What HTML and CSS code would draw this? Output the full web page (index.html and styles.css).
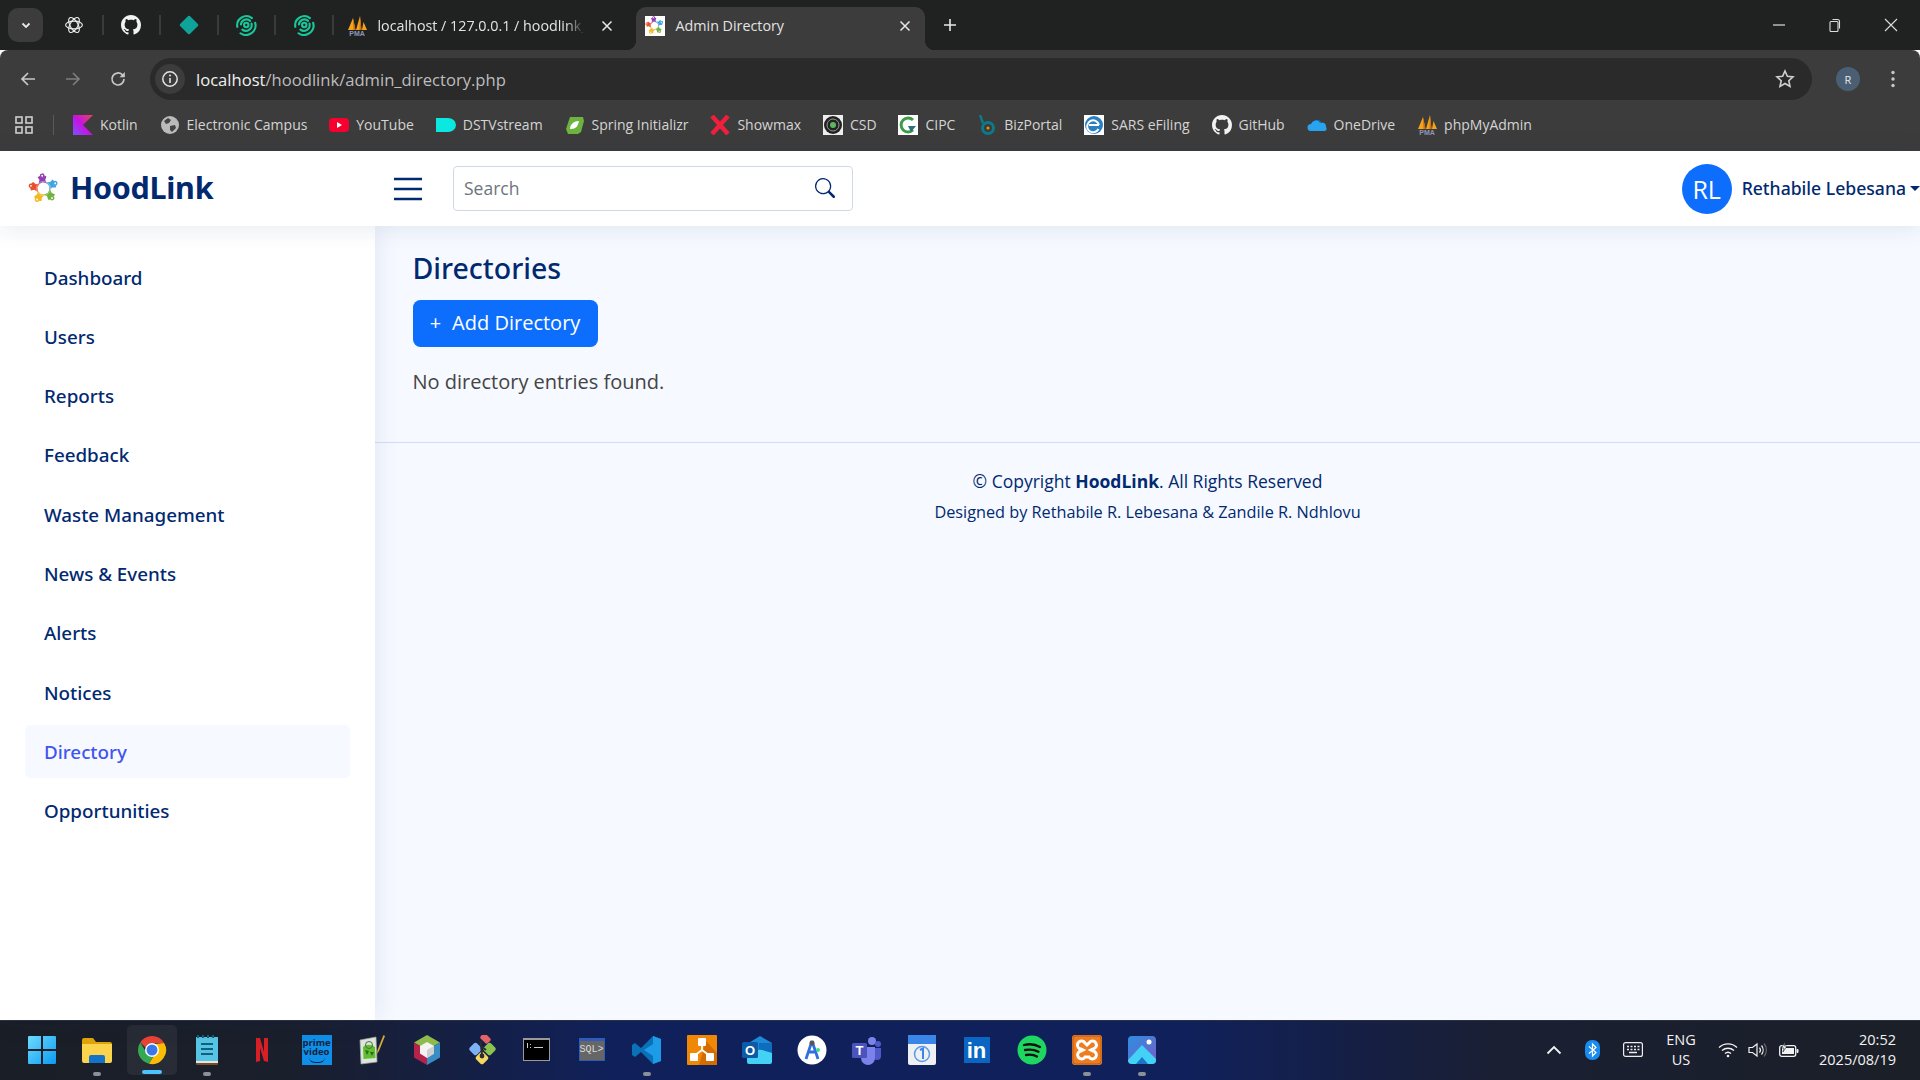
FILE: index.html
```html
<!DOCTYPE html>
<html lang="en">
<head>
<meta charset="utf-8">
<title>Admin Directory</title>
<link rel="stylesheet" href="styles.css">
</head>
<body>
<svg class="sprite" aria-hidden="true">
  <symbol id="i-github" viewBox="0 0 16 16"><path fill="currentColor" d="M8 0C3.58 0 0 3.58 0 8c0 3.54 2.29 6.53 5.47 7.59.4.07.55-.17.55-.38 0-.19-.01-.82-.01-1.49-2.01.37-2.53-.49-2.69-.94-.09-.23-.48-.94-.82-1.13-.28-.15-.68-.52-.01-.53.63-.01 1.08.58 1.23.82.72 1.21 1.87.87 2.33.66.07-.52.28-.87.51-1.07-1.78-.2-3.64-.89-3.64-3.95 0-.87.31-1.59.82-2.15-.08-.2-.36-1.02.08-2.12 0 0 .67-.21 2.2.82.64-.18 1.32-.27 2-.27s1.36.09 2 .27c1.53-1.04 2.2-.82 2.2-.82.44 1.1.16 1.92.08 2.12.51.56.82 1.27.82 2.15 0 3.07-1.87 3.75-3.65 3.95.29.25.54.73.54 1.48 0 1.07-.01 1.93-.01 2.2 0 .21.15.46.55.38A8.01 8.01 0 0 0 16 8c0-4.42-3.58-8-8-8"/></symbol>
  <symbol id="i-figure" viewBox="0 0 30 30">
    <path fill="currentColor" d="M10.500 10.500 12 6.500 10.500 3.500 12.500 2.500 14 4.500 16 4.500 17.500 2.500 19 3.800 17.500 7 19 10.500 15 9z"/>
    <circle cx="15" cy="2.600" r="2.300" fill="currentColor"/>
    <circle cx="15" cy="2.600" r=".9" fill="#fff"/>
  </symbol>
  <symbol id="i-logo" viewBox="0 0 30 30">
    <use href="#i-figure" class="f-purple" width="30" height="30" transform="rotate(-6 15 15)"/>
    <use href="#i-figure" class="f-blue" width="30" height="30" transform="rotate(66 15 15)"/>
    <use href="#i-figure" class="f-green" width="30" height="30" transform="rotate(138 15 15)"/>
    <use href="#i-figure" class="f-yellow" width="30" height="30" transform="rotate(210 15 15)"/>
    <use href="#i-figure" class="f-red" width="30" height="30" transform="rotate(282 15 15)"/>
    <circle cx="15" cy="15" r="6.800" fill="none" stroke="#e9e3d8" stroke-width=".5"/>
  </symbol>
  <symbol id="i-pma" viewBox="0 0 20 20">
    <path fill="#f7a21c" d="M1 14 6 2l2.500 12zM9 14 13 0l1.500 14zM15 14l1.500-8L20 14z"/>
    <path fill="#c96f0a" d="M6 2l.5 12h2zM13 0l-.5 14h2z"/>
  </symbol>
  <symbol id="i-swirl" viewBox="0 0 24 24">
    <g fill="none" stroke="#19c89a" stroke-width="2.300" stroke-linecap="round">
      <path d="M2.500 14A10 10 0 0 1 18.500 4.500"/>
      <path d="M6.500 11.500A6 6 0 0 1 16.500 7.500"/>
      <path d="M18 10.500A6.300 6.300 0 0 1 8 17"/>
      <path d="M22 9.500A10.500 10.500 0 0 1 6 21"/>
      <circle cx="12.300" cy="12" r="2.400"/>
    </g>
  </symbol>
</svg>

<div class="tabstrip">
  <button class="tab-list"><svg width="12" height="12" viewBox="0 0 12 12"><path d="M2.500 4.500 6 8l3.500-3.500" fill="none" stroke="#e8e8e8" stroke-width="1.800"/></svg></button>
  <div class="pinned">
    <span class="pin"><svg width="18" height="18" viewBox="0 0 20 20" fill="none" stroke="#ececec" stroke-width="1.300"><ellipse cx="10" cy="10" rx="9.300" ry="4.300"/><ellipse cx="10" cy="10" rx="9.300" ry="4.300" transform="rotate(60 10 10)"/><ellipse cx="10" cy="10" rx="9.300" ry="4.300" transform="rotate(120 10 10)"/></svg></span>
    <span class="pin"><svg class="ic-white" width="20" height="20"><use href="#i-github"/></svg></span>
    <span class="pin"><svg width="20" height="20" viewBox="0 0 20 20"><path fill="#0fa39a" stroke="#0fa39a" stroke-width="2.500" stroke-linejoin="round" d="M10 2 18 10 10 18 2 10z"/></svg></span>
    <span class="pin"><svg width="22" height="22"><use href="#i-swirl"/></svg></span>
    <span class="pin"><svg width="22" height="22"><use href="#i-swirl"/></svg></span>
  </div>
  <div class="tab tab-idle">
    <svg class="fav" width="20" height="20" viewBox="0 0 20 20"><use href="#i-pma" width="20" height="20"/><text class="pma-text" x="10" y="20">PMA</text></svg>
    <span class="tab-title tab-fade">localhost / 127.0.0.1 / hoodlink_</span>
    <svg class="tab-x" width="12" height="12" viewBox="0 0 12 12"><path d="M1.500 1.500l9 9m0-9-9 9" stroke="#e8e8e8" stroke-width="1.500"/></svg>
  </div>
  <div class="tab tab-active">
    <span class="fav-white"><svg width="19" height="19"><use href="#i-logo"/></svg></span>
    <span class="tab-title">Admin Directory</span>
    <svg class="tab-x" width="12" height="12" viewBox="0 0 12 12"><path d="M1.500 1.500l9 9m0-9-9 9" stroke="#e8e8e8" stroke-width="1.500"/></svg>
  </div>
  <svg class="tab-plus" width="14" height="14" viewBox="0 0 14 14"><path d="M7 1v12M1 7h12" stroke="#e8e8e8" stroke-width="1.600"/></svg>
  <div class="winctl">
    <svg width="14" height="14" viewBox="0 0 14 14"><path d="M1 7h12" stroke="#ddd" stroke-width="1.200"/></svg>
    <svg width="14" height="14" viewBox="0 0 14 14" fill="none" stroke="#ddd" stroke-width="1.100"><rect x="2" y="3.500" width="8" height="10" rx="1"/><path d="M4.500 1.500h5a2 2 0 0 1 2 2v7"/></svg>
    <svg width="14" height="14" viewBox="0 0 14 14"><path d="M1 1l12 12M13 1 1 13" stroke="#ddd" stroke-width="1.100"/></svg>
  </div>
</div>

<div class="toolbar">
  <svg class="nav" width="18" height="18" viewBox="0 0 18 18"><path d="M16 9H3M9 3 3 9l6 6" fill="none" stroke="#c8c8c8" stroke-width="1.700"/></svg>
  <svg class="nav" width="18" height="18" viewBox="0 0 18 18"><path d="M2 9h13M9 3l6 6-6 6" fill="none" stroke="#7d7d7d" stroke-width="1.700"/></svg>
  <svg class="nav" width="18" height="18" viewBox="0 0 18 18"><path d="M15 9a6 6 0 1 1-1.800-4.300L15 6.500" fill="none" stroke="#c8c8c8" stroke-width="1.700"/><path d="M15.800 2v5.300h-5.300z" fill="#c8c8c8"/></svg>
  <div class="omnibox">
    <span class="site-info"><svg width="18" height="18" viewBox="0 0 18 18"><circle cx="9" cy="9" r="7.200" fill="none" stroke="#e4e4e4" stroke-width="1.500"/><path d="M9 8v5" stroke="#e4e4e4" stroke-width="1.600"/><circle cx="9" cy="5.500" r="1" fill="#e4e4e4"/></svg></span>
    <span class="url"><b>localhost</b>/hoodlink/admin_directory.php</span>
    <svg class="star" width="20" height="20" viewBox="0 0 20 20"><path d="m10 2 2.400 5.300 5.600.6-4.200 3.800 1.200 5.700-5-2.900-5 2.900 1.200-5.700L2 7.900l5.600-.6z" fill="none" stroke="#d0d0d0" stroke-width="1.600"/></svg>
  </div>
  <span class="profile">R</span>
  <svg width="4" height="18" viewBox="0 0 4 18" class="dots"><circle cx="2" cy="2.500" r="1.700" fill="#c8c8c8"/><circle cx="2" cy="9" r="1.700" fill="#c8c8c8"/><circle cx="2" cy="15.500" r="1.700" fill="#c8c8c8"/></svg>
</div>

<div class="bookmarks">
  <svg class="apps" width="18" height="18" viewBox="0 0 18 18" fill="none" stroke="#cfcfcf" stroke-width="1.600"><rect x="1" y="1" width="6" height="6"/><rect x="11" y="1" width="6" height="6"/><rect x="1" y="11" width="6" height="6"/><rect x="11" y="11" width="6" height="6"/></svg>
  <span class="bm-sep"></span>
  <span class="bm"><svg width="20" height="20" viewBox="0 0 20 20"><defs><linearGradient id="kt" x1="0" y1="1" x2="1" y2="0"><stop offset="0" stop-color="#7f52ff"/><stop offset=".5" stop-color="#c711e1"/><stop offset="1" stop-color="#e44857"/></linearGradient></defs><path fill="url(#kt)" d="M0 0h20L10 10l10 10H0z"/></svg>Kotlin</span>
  <span class="bm"><svg width="20" height="20" viewBox="0 0 20 20"><circle cx="10" cy="10" r="9" fill="#bbb"/><path fill="#444" d="M4 6l4-3 3 2-2 3-3 1zM10 11l5-1 1 3-4 4-2-2z"/></svg>Electronic Campus</span>
  <span class="bm"><svg width="20" height="20" viewBox="0 0 20 20"><rect y="3" width="20" height="14" rx="4" fill="#f5002f"/><path fill="#fff" d="M8 7l5 3-5 3z"/></svg>YouTube</span>
  <span class="bm"><svg width="20" height="20" viewBox="0 0 20 20"><path fill="#0be8e0" d="M0 3h12a8 7 0 0 1 0 14H0z"/></svg>DSTVstream</span>
  <span class="bm"><svg width="20" height="20" viewBox="0 0 20 20"><path fill="#6db33f" d="M5 2h13l1 4-3 11-3 2H3l-2-5z"/><path fill="#fff" d="M5 14c0-5 4-8 9-8-1 5-3 8-8 8z"/></svg>Spring Initializr</span>
  <span class="bm"><svg width="20" height="20" viewBox="0 0 20 20" fill="none" stroke="#f0203c" stroke-width="4.500"><path d="M2 1l8 9-8 9M18 1l-8 9 8 9"/></svg>Showmax</span>
  <span class="bm"><svg width="20" height="20" viewBox="0 0 20 20"><rect width="20" height="20" fill="#eee"/><circle cx="10" cy="10" r="9" fill="#222"/><circle cx="10" cy="10" r="6" fill="none" stroke="#999"/><circle cx="10" cy="10" r="3" fill="#5fb55f"/></svg>CSD</span>
  <span class="bm"><svg width="20" height="20" viewBox="0 0 20 20"><rect width="20" height="20" fill="#fff"/><path d="M15 5a7 7 0 1 0 0 10" fill="none" stroke="#3d9c4a" stroke-width="3"/><path d="M10 11h8l-5 6z" fill="#2c6e7d"/></svg>CIPC</span>
  <span class="bm"><svg width="20" height="20" viewBox="0 0 20 20"><path d="M3 0l3 8" stroke="#0b7a8a" stroke-width="2.500"/><circle cx="11" cy="13" r="5.500" fill="none" stroke="#0b7a8a" stroke-width="3"/><circle cx="11" cy="13" r="1.500" fill="#f29111"/></svg>BizPortal</span>
  <span class="bm"><svg width="20" height="20" viewBox="0 0 20 20"><rect width="20" height="20" fill="#fff"/><circle cx="10" cy="10" r="9" fill="#2a7fc1"/><path d="M5 10h10M14.500 14a6 6 0 1 1 .5-4" fill="none" stroke="#fff" stroke-width="2"/></svg>SARS eFiling</span>
  <span class="bm"><svg class="ic-white" width="20" height="20"><use href="#i-github"/></svg>GitHub</span>
  <span class="bm"><svg width="20" height="20" viewBox="0 0 20 20"><path fill="#0a6ed1" d="M5 9a5 5 0 0 1 9-2l-2 8H4a3.500 3.500 0 0 1 1-6"/><path fill="#2aa3ee" d="M4 16a3.500 3.500 0 0 1 0-7 5 5 0 0 1 9-1 4 4 0 0 1 6 4 2.500 2.500 0 0 1-1 4z"/></svg>OneDrive</span>
  <span class="bm"><svg width="20" height="20" viewBox="0 0 20 20"><use href="#i-pma" width="20" height="20"/><text class="pma-text" x="10" y="20">PMA</text></svg>phpMyAdmin</span>
</div>

<header class="app-header">
  <div class="brand">
    <svg width="31" height="31"><use href="#i-logo"/></svg>
    <span class="brand-name">HoodLink</span>
  </div>
  <svg class="burger" width="28" height="24" viewBox="0 0 28 24"><path d="M0 2h28M0 12h28M0 22h28" stroke="#012970" stroke-width="2.400"/></svg>
  <div class="search">
    <span class="search-ph">Search</span>
    <svg width="20" height="20" viewBox="0 0 16 16"><path fill="#012970" d="M11.742 10.344a6.500 6.500 0 1 0-1.397 1.398h-.001q.044.06.098.115l3.850 3.850a1 1 0 0 0 1.415-1.414l-3.850-3.850a1 1 0 0 0-.115-.1zM12 6.500a5.500 5.500 0 1 1-11 0 5.500 5.500 0 0 1 11 0"/></svg>
  </div>
  <div class="user">
    <span class="avatar">RL</span>
    <span class="user-name">Rethabile Lebesana</span>
    <span class="caret"></span>
  </div>
</header>

<div class="app-body">
  <nav class="sidebar">
    <a class="nav-link">Dashboard</a>
    <a class="nav-link">Users</a>
    <a class="nav-link">Reports</a>
    <a class="nav-link">Feedback</a>
    <a class="nav-link">Waste Management</a>
    <a class="nav-link">News &amp; Events</a>
    <a class="nav-link">Alerts</a>
    <a class="nav-link">Notices</a>
    <a class="nav-link is-active">Directory</a>
    <a class="nav-link">Opportunities</a>
  </nav>
  <div class="content">
    <main class="main">
      <h1 class="page-title">Directories</h1>
      <button class="btn-add"><span class="plus">+</span>Add Directory</button>
      <p class="empty">No directory entries found.</p>
    </main>
    <footer class="footer">
      <div class="copyright">© Copyright <strong>HoodLink</strong>. All Rights Reserved</div>
      <div class="credits">Designed by Rethabile R. Lebesana &amp; Zandile R. Ndhlovu</div>
    </footer>
  </div>
</div>

<div class="taskbar">
  <div class="apps-row">
    <span class="slot"><svg width="30" height="30" viewBox="0 0 30 30"><defs><linearGradient id="win" x1="0" y1="0" x2="1" y2="1"><stop offset="0" stop-color="#6fdcff"/><stop offset="1" stop-color="#0a9bf0"/></linearGradient></defs><path fill="url(#win)" d="M1 2a1 1 0 0 1 1-1h12v13H1zM16 1h12a1 1 0 0 1 1 1v12H16zM1 16h13v13H2a1 1 0 0 1-1-1zM16 16h13v12a1 1 0 0 1-1 1H16z"/></svg></span>
    <span class="slot running"><svg width="30" height="30" viewBox="0 0 30 30"><path fill="#e0a30a" d="M0 5a2 2 0 0 1 2-2h9l3 4h14a2 2 0 0 1 2 2v6H0z"/><path fill="#fcd34d" d="M0 9h30v17a2 2 0 0 1-2 2H2a2 2 0 0 1-2-2z"/><path fill="#1473c9" d="M7 22a2 2 0 0 1 2-2h12a2 2 0 0 1 2 2v6H7z"/></svg></span>
    <span class="slot focused"><svg width="30" height="30" viewBox="0 0 30 30"><path fill="#ea4335" d="M15 1a14 14 0 0 1 12.100 7H15a7 7 0 0 0-6.500 4.500L3.300 7.500A14 14 0 0 1 15 1z"/><path fill="#34a853" d="M3.300 7.500 9 17a7 7 0 0 0 7 5l-4 6.800A14 14 0 0 1 3.300 7.500z"/><path fill="#fbbc05" d="M27.100 8A14 14 0 0 1 12 28.800L18 19a7 7 0 0 0-1-10z"/><circle cx="15" cy="15" r="7" fill="#fff"/><circle cx="15" cy="15" r="5.500" fill="#3b78e7"/></svg></span>
    <span class="slot running"><svg width="24" height="30" viewBox="0 0 24 30"><path fill="#56c4e4" d="M1 2h22v24H1z"/><path fill="#7a4a2a" d="M1 26h22v3a1 1 0 0 1-1 1H2a1 1 0 0 1-1-1z"/><path fill="#e9e4da" d="M1 26h22v2H1z"/><path d="M6 9h12M6 14h12M6 19h12" stroke="#14607c" stroke-width="2"/><path fill="#14607c" d="M2 0h2v3H2zM7 0h2v3H7zM12 0h2v3h-2zM17 0h2v3h-2z"/></svg></span>
    <span class="slot"><svg width="14" height="24" viewBox="0 0 14 24"><path fill="#d81f26" d="M1 0h4l4 14V0h4v24l-4-1L5 10v13l-4 1z"/></svg></span>
    <span class="slot"><span class="prime">prime<br>video</span></span>
    <span class="slot"><svg width="28" height="30" viewBox="0 0 28 30"><path fill="#dfe5dc" stroke="#9aa39a" stroke-width=".7" d="M2 5l16-3 1 25-16 2z"/><path fill="#5fbf2f" d="M5 12c3-3 8-3 12 0l.5 11-12 1z"/><circle cx="11" cy="10" r="3.500" fill="none" stroke="#4f6b46"/><path fill="#2e6a1b" d="M7 15l4 1-2 4zM12 17l4 0-2 4z"/><path d="M27 1l-6 15-2 3 .5-4 6-15z" fill="#d7a83b"/></svg></span>
    <span class="slot"><svg width="26" height="30" viewBox="0 0 26 30"><path fill="#8dbb4c" d="M13 0 26 7.500 13 15 0 7.500z"/><path fill="#b5234a" d="M0 7.500 13 15v15L0 22.500z"/><path fill="#3a8cc4" d="M26 7.500 13 15v15l13-7.500z"/><path fill="#f3f3f3" d="M13 7l7 4v7.500L13 23l-7-4.500V11z"/><path fill="#cfcfcf" d="M13 15l7-4v7.500L13 23z"/></svg></span>
    <span class="slot"><svg width="30" height="30" viewBox="0 0 30 30"><rect x="13.500" y="0" width="10" height="7" rx="2" fill="#e4626a" transform="rotate(45 18.500 3.500)"/><rect x="3.500" y="9" width="10" height="10" rx="2" fill="#7db1f5" transform="rotate(45 8.500 14)"/><rect x="17.500" y="9" width="10" height="10" rx="2" fill="#8cc34f" transform="rotate(45 22.500 14)"/><rect x="10" y="18" width="10" height="10" rx="2" fill="#f6d860" transform="rotate(45 15 23)"/><path d="M13.500 6 15 20M15 12l4 3" stroke="#2c2c34" stroke-width="2"/><circle cx="15" cy="21" r="2.400" fill="#2c2c34"/></svg></span>
    <span class="slot"><span class="cmd"><svg width="18" height="6" viewBox="0 0 18 6"><path d="M1 0h1v5H1zM4 1h1v1H4zm0 3h1v1H4zM8 4h9v1H8z" fill="#ccc"/></svg></span></span>
    <span class="slot"><span class="sqlplus">SQL&gt;</span></span>
    <span class="slot running"><svg width="30" height="30" viewBox="0 0 30 30"><path fill="#0a70b8" d="M21 1 9 13 3 8 0 10v10l3 2 6-5 12 12 8-3V4z"/><path fill="#1e9be6" d="M21 1l8 3v22l-8 3zM21 9l-9 6 9 6z" fill-rule="evenodd"/></svg></span>
    <span class="slot"><svg width="30" height="30" viewBox="0 0 30 30"><rect width="30" height="30" rx="1" fill="#f08705"/><path fill="#d56c00" d="M30 30H12L19 6l11 12z"/><path d="M15 10v5M15 15l-8 6M15 15l8 6" stroke="#fff" stroke-width="1.800" fill="none"/><rect x="11" y="3" width="8" height="8" rx="1" fill="#fff"/><rect x="3" y="18" width="8" height="8" rx="1" fill="#fff"/><rect x="19" y="18" width="8" height="8" rx="1" fill="#fff"/></svg></span>
    <span class="slot"><svg width="30" height="30" viewBox="0 0 30 30"><path fill="#1c8ad8" d="M5 9l13-8 12 7v10H5z"/><path fill="#43d2f6" d="M5 15h25v12a2 2 0 0 1-2 2H7a2 2 0 0 1-2-2z"/><path fill="#0f6cbd" d="M17 8h13v10l-13-4z"/><rect y="7" width="16" height="16" rx="1.500" fill="#0d5aa7"/><text class="o-letter" x="8" y="20">O</text></svg></span>
    <span class="slot"><svg width="30" height="30" viewBox="0 0 30 30"><circle cx="15" cy="15" r="14.500" fill="#fff"/><path d="M15 6 9 24M15 6l6 18M10.500 17h9" fill="none" stroke="#2f6fe0" stroke-width="2.800"/><circle cx="15" cy="8" r="2.500" fill="#555"/><circle cx="21" cy="15" r="2" fill="#3ddc84"/></svg></span>
    <span class="slot"><svg width="30" height="30" viewBox="0 0 30 30"><circle cx="20" cy="6" r="4" fill="#7b83eb"/><circle cx="26" cy="9" r="3" fill="#5059c9"/><path fill="#5059c9" d="M21 13h8v8a4 4 0 0 1-8 0z"/><path fill="#7b83eb" d="M8 12h15v11a7 7 0 0 1-14 0z"/><rect y="8" width="15" height="15" rx="1.500" fill="#4b53bc"/><text class="t-letter" x="7.500" y="20">T</text></svg></span>
    <span class="slot"><svg width="28" height="30" viewBox="0 0 28 30"><rect width="28" height="30" rx="2" fill="#eef0f3"/><path fill="#3a86e8" d="M0 2a2 2 0 0 1 2-2h24a2 2 0 0 1 2 2v7H0z"/><circle cx="14" cy="19" r="7.500" fill="none" stroke="#5b9be8" stroke-width="1.500"/><path d="M12 15l3-1.500V24" fill="none" stroke="#3a86e8" stroke-width="2"/></svg></span>
    <span class="slot"><span class="linkedin">in</span></span>
    <span class="slot"><svg width="30" height="30" viewBox="0 0 30 30"><circle cx="15" cy="15" r="14.500" fill="#1ed760"/><path d="M7 10c6-1.500 11-1 16 2M8 15c5-1 9-.7 13.500 1.800M9 20c4-.8 7.500-.6 11 1.500" fill="none" stroke="#111" stroke-width="2.300" stroke-linecap="round"/></svg></span>
    <span class="slot running"><svg width="30" height="30" viewBox="0 0 30 30"><rect width="30" height="30" rx="3" fill="#ee7d22"/><rect x="1" y="1" width="28" height="28" rx="3" fill="none" stroke="#b85f15"/><path d="M10 6a4 4 0 0 0-1 8l2 1-2 1a4 4 0 1 0 4 6h4a4 4 0 1 0 4-6l-2-1 2-1a4 4 0 1 0-4-6l-2 2-2-2a4 4 0 0 0-3-2z" fill="none" stroke="#fff" stroke-width="3"/></svg></span>
    <span class="slot running"><svg width="28" height="28" viewBox="0 0 28 28"><defs><linearGradient id="ph" x1="0" y1="0" x2="1" y2="1"><stop offset="0" stop-color="#2b8fe0"/><stop offset="1" stop-color="#7a5bc8"/></linearGradient></defs><rect width="28" height="28" rx="4" fill="url(#ph)"/><path fill="#43d2f6" d="M0 24 14 9l14 14v1a4 4 0 0 1-4 4H4a4 4 0 0 1-4-4z"/><path fill="#1b74c9" d="M8 28l6-7 6 7z"/><circle cx="21" cy="6" r="2.500" fill="#fff"/></svg></span>
  </div>
  <div class="tray">
    <svg class="tray-up" width="16" height="10" viewBox="0 0 16 10"><path d="M1.500 8.500 8 2l6.500 6.500" fill="none" stroke="#f2f2f2" stroke-width="1.800"/></svg>
    <span class="bt"><svg width="9" height="16" viewBox="0 0 9 16"><path d="M1 4.500l7 6L4.500 14V2L8 5.500l-7 6" fill="none" stroke="#fff" stroke-width="1.200"/></svg></span>
    <svg class="tray-kb" width="20" height="15" viewBox="0 0 20 15"><rect x=".6" y=".6" width="18.800" height="13.800" rx="2" fill="none" stroke="#eee" stroke-width="1.200"/><path d="M4 4.500h2M7.500 4.500h2M11 4.500h2M14.500 4.500h2M4 7.500h2M7.500 7.500h2M11 7.500h2M14.500 7.500h2M6 10.500h8" stroke="#eee" stroke-width="1.300"/></svg>
    <span class="lang">ENG<br>US</span>
    <svg class="tray-wifi" width="20" height="16" viewBox="0 0 20 16"><path d="M1 5.500a13 13 0 0 1 18 0M4 8.500a9 9 0 0 1 12 0M7 11.500a4.500 4.500 0 0 1 6 0" fill="none" stroke="#f2f2f2" stroke-width="1.400"/><circle cx="10" cy="14" r="1.300" fill="#f2f2f2"/></svg>
    <svg class="tray-vol" width="20" height="16" viewBox="0 0 20 16"><path d="M1 5.500h3.500L9 2v12L4.500 10.500H1z" fill="none" stroke="#f2f2f2" stroke-width="1.200"/><path d="M11.500 5.500a4 4 0 0 1 0 5M13.500 3.500a7 7 0 0 1 0 9" fill="none" stroke="#f2f2f2" stroke-width="1.200"/><path d="M16 1.500a10 10 0 0 1 0 13" fill="none" stroke="#666" stroke-width="1.200"/></svg>
    <svg class="tray-bat" width="20" height="16" viewBox="0 0 20 16"><rect x=".7" y="3.700" width="16" height="10.600" rx="2" fill="none" stroke="#f2f2f2" stroke-width="1.300"/><rect x="3" y="6" width="12" height="6" fill="#f2f2f2"/><rect x="17.500" y="7" width="2" height="4" rx="1" fill="#f2f2f2"/><path d="M6 0 2.500 6H5l-1 4 4-6H5.500z" fill="#f2f2f2" stroke="#1b1f27" stroke-width=".6"/></svg>
    <span class="clock">20:52<br>2025/08/19</span>
  </div>
</div>
</body>
</html>
```

FILE: styles.css
```css
* { box-sizing: border-box; }
html, body { margin: 0; height: 100%; }
body {
  width: 1920px;
  height: 1080px;
  overflow: hidden;
  display: flex;
  flex-direction: column;
  font-family: "Open Sans", "Liberation Sans", sans-serif;
  background: #f6f9ff;
}
.sprite { position: absolute; width: 0; height: 0; }
.ic-white { color: #f2f2f2; }
.f-purple { color: #8e3fb0; }
.f-blue { color: #3fa5e0; }
.f-green { color: #6fb13c; }
.f-yellow { color: #f4b81f; }
.f-red { color: #e8502c; }
.pma-text {
  fill: #8f97b8;
  font-family: "Liberation Sans", sans-serif;
  font-size: 7px;
  font-weight: 700;
  text-anchor: middle;
}

/* browser chrome */
.tabstrip {
  height: 50px;
  flex: none;
  display: flex;
  align-items: center;
  padding-left: 8px;
  background: #202221;
  color: #e3e3e3;
}
.tab-list {
  width: 35px;
  height: 34px;
  padding: 0;
  border: 0;
  border-radius: 10px;
  background: #3c3c3c;
  display: flex;
  align-items: center;
  justify-content: center;
}
.pinned { display: flex; margin-left: 3px; }
.pin {
  width: 57.500px;
  height: 20px;
  display: flex;
  align-items: center;
  justify-content: center;
  border-right: 2px solid #3a3c3b;
}
.tab {
  height: 43px;
  align-self: flex-end;
  display: flex;
  align-items: center;
  padding-bottom: 6px;
  font-size: 14.300px;
}
.tab-idle { width: 302px; padding-left: 13px; padding-right: 23px; }
.tab-active {
  position: relative;
  width: 289px;
  padding-left: 9px;
  padding-right: 14px;
  background: #3c3c3c;
  border-radius: 10px 10px 0 0;
}
.tab-active::before, .tab-active::after {
  content: "";
  position: absolute;
  bottom: 0;
  width: 10px;
  height: 10px;
}
.tab-active::before { left: -10px; background: radial-gradient(circle at 0 0, transparent 10px, #3c3c3c 10.500px); }
.tab-active::after { right: -10px; background: radial-gradient(circle at 100% 0, transparent 10px, #3c3c3c 10.500px); }
.fav { flex: none; margin-right: 11px; }
.fav-white {
  flex: none;
  width: 20px;
  height: 20px;
  margin-right: 11px;
  background: #fff;
  display: flex;
  align-items: center;
  justify-content: center;
}
.tab-title { flex: 1; min-width: 0; white-space: nowrap; }
.tab-fade {
  margin-right: 10px;
  -webkit-mask-image: linear-gradient(90deg, #000 88%, transparent 97%);
  mask-image: linear-gradient(90deg, #000 88%, transparent 97%);
}
.tab-x { flex: none; }
.tab-plus { margin-left: 18px; }
.winctl {
  margin-left: auto;
  padding-right: 22px;
  display: flex;
  gap: 42px;
}
.toolbar {
  height: 50px;
  flex: none;
  display: flex;
  align-items: center;
  padding: 8px 0 0 19px;
  background: #3c3c3c;
  border-radius: 8px 8px 0 0;
}
.nav { flex: none; margin-right: 27px; }
.toolbar .nav:nth-child(3) { margin-right: 23px; }
.omnibox {
  width: 1662px;
  height: 42px;
  flex: none;
  display: flex;
  align-items: center;
  padding: 0 17px 0 5px;
  background: #2a2a2a;
  border-radius: 21px;
}
.site-info {
  width: 30px;
  height: 30px;
  border-radius: 50%;
  background: #3c3c3c;
  display: flex;
  align-items: center;
  justify-content: center;
}
.url { margin-left: 11px; font-size: 16.600px; color: #bdbdbd; }
.url b { font-weight: 400; color: #f0f0f0; }
.star { margin-left: auto; }
.profile {
  width: 24px;
  height: 24px;
  flex: none;
  margin-left: 24px;
  border-radius: 50%;
  background: #4a5f73;
  color: #e8e8e8;
  font-size: 11px;
  display: flex;
  align-items: center;
  justify-content: center;
}
.dots { margin-left: 31px; }
.bookmarks {
  height: 51px;
  flex: none;
  display: flex;
  align-items: center;
  gap: 21.900px;
  padding: 0 0 2px 15px;
  background: #3c3c3c;
}
.apps { flex: none; }
.bm-sep { width: 1px; height: 20px; margin: 0 -2.900px 0 -1.900px; background: #5a5a5a; }
.bm {
  display: flex;
  align-items: center;
  gap: 7px;
  font-size: 14px;
  color: #d4d4d4;
  white-space: nowrap;
}
.bm svg { flex: none; }

/* app header */
.app-header {
  position: relative;
  z-index: 3;
  height: 75px;
  flex: none;
  display: flex;
  align-items: center;
  background: #fff;
  box-shadow: 0 2px 25px rgba(1, 41, 112, .1);
}
.brand { width: 394px; padding-left: 28px; display: flex; align-items: center; gap: 11px; }
.brand-name {
  padding-bottom: 3px;
  font-family: "Noto Sans", sans-serif;
  font-size: 30.500px;
  font-weight: 700;
  letter-spacing: -.3px;
  line-height: 42px;
  color: #012970;
}
.burger { flex: none; }
.search {
  width: 400px;
  height: 45px;
  margin-left: 31px;
  display: flex;
  align-items: center;
  justify-content: space-between;
  padding: 0 17px 2px 10px;
  border: 1.500px solid #d0d8e6;
  border-radius: 4px;
}
.search-ph { font-size: 17.500px; color: #6c757d; }
.user { margin-left: auto; display: flex; align-items: center; }
.avatar {
  width: 50px;
  height: 50px;
  border-radius: 50%;
  background: #0d6efd;
  color: #fff;
  font-size: 25px;
  display: flex;
  align-items: center;
  justify-content: center;
}
.user-name {
  margin-left: 10px;
  padding-bottom: 1px;
  font-family: "Noto Sans", sans-serif;
  font-size: 17.600px;
  font-weight: 500;
  color: #012970;
  white-space: nowrap;
}
.caret {
  width: 0;
  height: 0;
  margin-left: 4px;
  border: 5px solid transparent;
  border-top-color: #012970;
  border-bottom-width: 0;
}

/* layout */
.app-body { flex: 1; min-height: 0; display: flex; }
.sidebar {
  width: 375px;
  flex: none;
  display: flex;
  flex-direction: column;
  gap: 6.300px;
  padding: 25px 25px 0;
  background: #fff;
  box-shadow: 0 0 25px rgba(1, 41, 112, .1);
  position: relative;
  z-index: 2;
}
.nav-link {
  height: 53px;
  flex: none;
  display: flex;
  align-items: center;
  padding: 0 19px;
  border-radius: 5px;
  font-family: "Noto Sans", sans-serif;
  font-size: 18.800px;
  font-weight: 500;
  color: #012970;
}
.is-active { background: #f6f9ff; color: #4154f1; }
.content { flex: 1; min-width: 0; display: flex; flex-direction: column; }
.main { padding: 24px 37.500px 45px; }
.page-title {
  margin: 0 0 14px;
  font-family: "Noto Sans", sans-serif;
  font-size: 28.500px;
  font-weight: 500;
  line-height: 36px;
  color: #012970;
}
.btn-add {
  height: 47px;
  width: 185px;
  padding: 0 0 2px;
  border: 0;
  border-radius: 7.500px;
  background: #0d6efd;
  color: #fff;
  font-family: "Open Sans", sans-serif;
  font-size: 20px;
  display: block;
}
.plus { margin-right: 11px; }
.empty { margin: 20px 0 0; font-size: 20px; line-height: 30px; color: #444; }
.footer {
  padding-top: 25px;
  border-top: 1.500px solid #cddfff;
  text-align: center;
  color: #012970;
}
.copyright { font-size: 17.500px; line-height: 26px; }
.copyright strong { font-weight: 700; }
.credits { margin-top: 6px; font-size: 16.250px; line-height: 24px; }

/* taskbar */
.taskbar {
  height: 60px;
  flex: none;
  display: flex;
  align-items: center;
  padding: 0 0 2px 14px;
  border-top: 1px solid #2b3140;
  background: linear-gradient(90deg, #1a1e26 0, #1a1f2c 15%, #10205a 32%, #10205a 62%, #1a1f33 78%, #1b1f27 100%);
}
.apps-row { display: flex; }
.slot {
  position: relative;
  width: 55px;
  height: 50px;
  display: flex;
  align-items: center;
  justify-content: center;
}
.running::after {
  content: "";
  position: absolute;
  left: 23.500px;
  bottom: -1px;
  width: 8px;
  height: 4px;
  border-radius: 2px;
  background: #8a8f98;
}
.focused {
  background: rgba(255, 255, 255, .06);
  border-radius: 5px;
  width: 50px;
  margin: 0 2.500px;
}
.focused::after {
  content: "";
  position: absolute;
  left: 15px;
  bottom: 1px;
  width: 20px;
  height: 4px;
  border-radius: 2px;
  background: #4cc2ff;
}
.prime {
  position: relative;
  width: 30px;
  height: 30px;
  padding-top: 3px;
  background: #0f8fe8;
  color: #10233c;
  font-size: 9.500px;
  font-weight: 700;
  line-height: 9.500px;
  text-align: center;
}
.prime::after {
  content: "";
  position: absolute;
  left: 7px;
  bottom: 2px;
  width: 16px;
  height: 5px;
  border-bottom: 1.500px solid #10233c;
  border-radius: 0 0 8px 8px;
}
.cmd {
  width: 27px;
  height: 23px;
  padding: 3px 2px;
  background: #000;
  border: 1px solid #9a9a9a;
  border-top-width: 2px;
  display: block;
}
.cmd svg { display: block; }
.sqlplus {
  width: 26px;
  height: 23px;
  background: #666;
  border: 1px solid #2f5cb8;
  border-top-width: 3px;
  color: #ddd;
  font-family: "Liberation Mono", monospace;
  font-size: 10px;
  line-height: 17px;
  text-align: center;
}
.linkedin {
  width: 26px;
  height: 26px;
  background: #0a66c2;
  color: #fff;
  font-family: "Liberation Sans", sans-serif;
  font-size: 22px;
  font-weight: 700;
  line-height: 27px;
  text-align: center;
}
.o-letter, .t-letter {
  fill: #fff;
  font-family: "Liberation Sans", sans-serif;
  font-size: 13px;
  font-weight: 700;
  text-anchor: middle;
}
.tray {
  margin-left: auto;
  padding-right: 24px;
  display: flex;
  align-items: center;
  color: #f2f2f2;
  font-size: 14.500px;
  line-height: 20px;
}
.tray-up { margin-right: 23px; }
.bt {
  width: 15px;
  height: 20px;
  margin-right: 23px;
  border-radius: 7px;
  background: #1a8cf0;
  display: flex;
  align-items: center;
  justify-content: center;
}
.tray-kb { margin-right: 10px; }
.lang { width: 56px; margin-right: 9px; text-align: center; }
.tray-wifi { margin-right: 10px; }
.tray-vol { margin-right: 11px; }
.tray-bat { margin-right: 20px; }
.clock { text-align: right; }
```
